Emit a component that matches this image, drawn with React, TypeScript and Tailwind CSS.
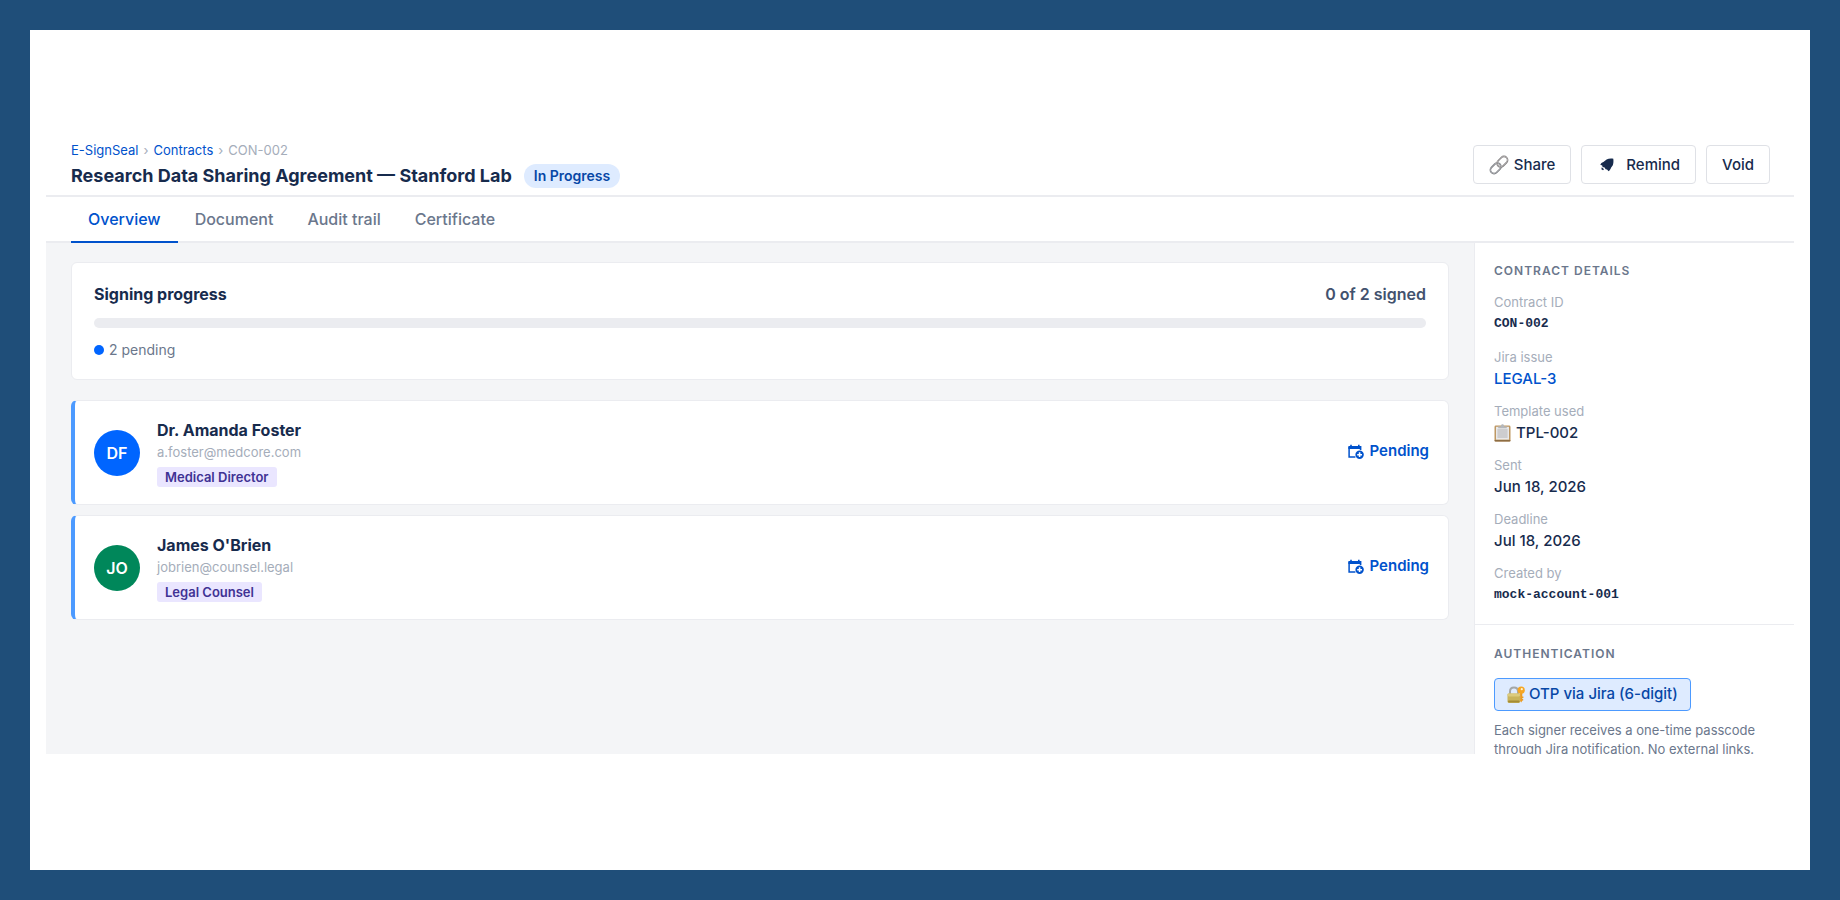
import type { ReactNode } from "react";

function LinkIcon() {
  return (
    <svg width="20" height="20" viewBox="0 0 20 20" fill="none" aria-hidden="true">
      <g transform="rotate(-45 10 10)">
        <rect x="-0.6" y="6.4" width="11.8" height="7.2" rx="3.6" stroke="#77797d" strokeWidth="1.7" />
        <rect x="-0.6" y="6.2" width="11.8" height="7.2" rx="3.6" stroke="#c4c6ca" strokeWidth="0.6" />
        <rect x="8.8" y="6.4" width="11.8" height="7.2" rx="3.6" stroke="#7d7b7c" strokeWidth="1.7" />
        <rect x="8.8" y="6.2" width="11.8" height="7.2" rx="3.6" stroke="#cfcdcd" strokeWidth="0.6" />
      </g>
    </svg>
  );
}

function ClipboardIcon() {
  return (
    <svg width="17" height="18" viewBox="0 0 17 18" aria-hidden="true">
      <rect x="0.5" y="1.6" width="16" height="16" rx="1.4" fill="#bd9763" />
      <rect x="0.5" y="16" width="16" height="1.6" rx="0.8" fill="#8d6d44" />
      <rect x="2" y="2.8" width="13" height="12.8" fill="#e9e9ea" />
      <rect x="3.4" y="5" width="10.2" height="9" fill="#cdcdcf" />
      <path d="M4.2 4.2 V2.4 H6.8 C7 0.9 7.6 0.3 8.5 0.3 S10 0.9 10.2 2.4 H12.8 V4.2 Z" fill="#b4b7bb" />
    </svg>
  );
}

function LockKeyIcon() {
  return (
    <svg width="18" height="18" viewBox="0 0 18 18" fill="none" aria-hidden="true">
      <path d="M3 9 V5.6 C3 2.8 4.8 1.6 7 1.6 S11 2.8 11 5.6 V9" stroke="#a3a7a9" strokeWidth="2" />
      <rect x="0.5" y="7.4" width="12.6" height="9.6" rx="1.4" fill="#c9b45c" />
      <rect x="0.5" y="7.4" width="12.6" height="3" rx="1.4" fill="#dccb7e" />
      <rect x="1" y="14.6" width="11.6" height="2" rx="1" fill="#a38b35" />
      <path d="M13.1 7 H15.3 V14.8 L14.2 16.4 L13.1 15 Z" fill="#eb9b1f" />
      <path d="M15 10.6 H16.4 V12 H15 Z M15 13 H16.2 V14.4 H15 Z" fill="#eb9b1f" />
      <circle cx="14.2" cy="4.2" r="3.6" fill="#f5a623" />
      <circle cx="14.8" cy="3.2" r="1.1" fill="#fff3d6" />
    </svg>
  );
}

function RemindIcon() {
  return (
    <svg width="14" height="14" viewBox="0 0 14 14" fill="#172b4d" aria-hidden="true">
      <path d="M13.3 0.7 C10.6 0.4 8.2 0.6 6.6 1.5 L3.4 3.9 C1.9 4.5 0.8 5.3 0.3 6.8 L2.2 7.6 L2.6 9 L4.6 9.6 L5.6 11.2 L7 11.4 L8.6 13.2 C10 12.2 10.6 11.2 11 9.8 L12.8 7.2 C13.5 5.4 13.6 3.2 13.3 0.7 Z" />
      <path d="M1.8 9.2 L4 11.2 L3 12.2 L1.4 11.2 Z" />
    </svg>
  );
}

function PendingIcon() {
  return (
    <svg width="16" height="16" viewBox="0 0 16 16" fill="none" aria-hidden="true">
      <path d="M0.4 2 H13.4 V6 H11.8 V5 H0.4 Z" fill="#0052cc" />
      <path d="M3 0.8 V3 M10.8 0.8 V3" stroke="#0052cc" strokeWidth="1.6" />
      <path d="M1.1 3 V13.1 H7.4" stroke="#0052cc" strokeWidth="1.5" />
      <circle cx="11.6" cy="10.7" r="4.2" fill="#0052cc" />
      <path d="M11.6 8.3 V13.1 M9.2 10.7 H14" stroke="#fff" strokeWidth="1.6" />
    </svg>
  );
}

const tabs = ["Overview", "Document", "Audit trail", "Certificate"];

const signers = [
  { initials: "DF", name: "Dr. Amanda Foster", email: "a.foster@medcore.com", role: "Medical Director", color: "bg-[#0065ff]" },
  { initials: "JO", name: "James O'Brien", email: "jobrien@counsel.legal", role: "Legal Counsel", color: "bg-[#00875a]" },
];

const mono = "block font-['Liberation_Mono',monospace] text-[13px] leading-[22px] font-bold";

const details: { label: string; value: ReactNode }[] = [
  { label: "Contract ID", value: <span className={mono}>CON-002</span> },
  { label: "Jira issue", value: <a href="#issue" className="text-[#0052cc]">LEGAL-3</a> },
  { label: "Template used", value: <span className="flex items-center gap-[5px]"><ClipboardIcon />TPL-002</span> },
  { label: "Sent", value: "Jun 18, 2026" },
  { label: "Deadline", value: "Jul 18, 2026" },
  { label: "Created by", value: <span className={mono}>mock-account-001</span> },
];

function ActionButton({ icon, children }: { icon?: ReactNode; children: ReactNode }) {
  return (
    <button type="button" className="flex h-[39px] items-center rounded border border-[#dfe1e6] bg-white px-[15px] pt-[2px] text-[15px] font-medium">
      {icon}
      {children}
    </button>
  );
}

function SectionTitle({ children }: { children: ReactNode }) {
  return <h2 className="text-xs leading-4 font-semibold tracking-[1px] text-[#6b778c] uppercase">{children}</h2>;
}

export default function App() {
  return (
    <div className="min-h-screen bg-[#1f4e79] p-[30px] font-[Inter,sans-serif] text-[#172b4d]">
      <div className="min-h-[calc(100vh-60px)] bg-white px-4 pt-[106px]">
        <header className="flex items-center justify-between border-b-2 border-[#ebecf0] pt-1 pr-6 pb-[7px] pl-[25px]">
          <div>
            <nav aria-label="Breadcrumb" className="flex gap-[5px] text-[13px] leading-5 text-[#a5adba]">
              <a href="#home" className="text-[#0052cc]">E-SignSeal</a>
              <span>›</span>
              <a href="#contracts" className="text-[#0052cc]">Contracts</a>
              <span>›</span>
              <span>CON-002</span>
            </nav>
            <div className="mt-1 flex items-center gap-3">
              <h1 className="text-lg leading-6 font-bold">Research Data Sharing Agreement — Stanford Lab</h1>
              <span className="rounded-full bg-[#deebff] px-[10px] py-[2px] text-sm leading-5 font-semibold text-[#0747a6]">In Progress</span>
            </div>
          </div>
          <div className="flex gap-[10px]">
            <ActionButton icon={<span className="mr-[5px]"><LinkIcon /></span>}>Share</ActionButton>
            <ActionButton icon={<span className="mr-3 ml-[3px]"><RemindIcon /></span>}>Remind</ActionButton>
            <ActionButton>Void</ActionButton>
          </div>
        </header>

        <nav aria-label="Sections" className="flex border-b-2 border-[#ebecf0] px-[25px]">
          {tabs.map((tab, i) => (
            <button
              key={tab}
              type="button"
              className={`-mb-[2px] h-[46px] border-b-2 px-[17px] text-base font-medium ${i === 0 ? "border-[#0052cc] text-[#0052cc]" : "border-transparent text-[#6b778c]"}`}
            >
              {tab}
            </button>
          ))}
        </nav>

        <div className="flex h-[511px] overflow-hidden">
          <main className="min-w-0 flex-1 bg-[#f4f5f7] px-[25px] pt-[19px]">
            <section className="rounded-md border border-[#ebecf0] bg-white px-[22px] pt-[19px] pb-[19px]">
              <div className="flex justify-between text-base leading-6">
                <h2 className="font-bold">Signing progress</h2>
                <span className="font-semibold text-[#42526e]">0 of 2 signed</span>
              </div>
              <div className="mt-3 h-[10px] rounded-full bg-[#ebecf0]" />
              <p className="mt-3 flex items-center gap-[5px] text-sm leading-5 text-[#6b778c]">
                <span className="size-[10px] rounded-full bg-[#0065ff]" />2 pending
              </p>
            </section>

            <ul className="mt-5 flex flex-col gap-[10px]">
              {signers.map((s) => (
                <li key={s.initials} className="flex h-[105px] items-center rounded-md border border-l-4 border-[#ebecf0] border-l-[#4c9aff] bg-white px-[19px]">
                  <span className={`flex size-[46px] items-center justify-center rounded-full text-base font-semibold text-white ${s.color}`}>{s.initials}</span>
                  <div className="ml-[17px] flex flex-1 flex-col items-start">
                    <h3 className="text-base leading-[22px] font-bold">{s.name}</h3>
                    <span className="text-[13px] leading-[22px] text-[#a5adba]">{s.email}</span>
                    <span className="mt-1 rounded-[3px] bg-[#eae6ff] px-2 text-[13px] leading-5 font-semibold text-[#403294]">{s.role}</span>
                  </div>
                  <span className="flex items-center gap-[6px] pb-[2px] text-[15px] font-semibold text-[#0052cc]">
                    <PendingIcon />Pending
                  </span>
                </li>
              ))}
            </ul>
          </main>

          <aside className="w-80 shrink-0 border-l border-[#ebecf0] bg-white">
            <section className="border-b border-[#ebecf0] px-[19px] pt-5 pb-[18px]">
              <SectionTitle>Contract details</SectionTitle>
              <dl className="mt-3 flex flex-col gap-[11px]">
                {details.map((d) => (
                  <div key={d.label}>
                    <dt className="text-[13px] leading-[22px] text-[#a5adba]">{d.label}</dt>
                    <dd className="text-[15px] leading-[21px] font-medium">{d.value}</dd>
                  </div>
                ))}
              </dl>
            </section>
            <section className="px-[19px] pt-[21px]">
              <SectionTitle>Authentication</SectionTitle>
              <div className="mt-4 flex h-[33px] w-fit items-center gap-1 rounded border border-[#4c9aff] bg-[#deebff] px-3 text-[15px] font-medium text-[#0747a6]">
                <LockKeyIcon />
                OTP via Jira (6-digit)
              </div>
              <p className="mt-[10px] text-[13px] leading-[19px] text-[#6b778c]">Each signer receives a one-time passcode through Jira notification. No external links.</p>
            </section>
          </aside>
        </div>
      </div>
    </div>
  );
}
